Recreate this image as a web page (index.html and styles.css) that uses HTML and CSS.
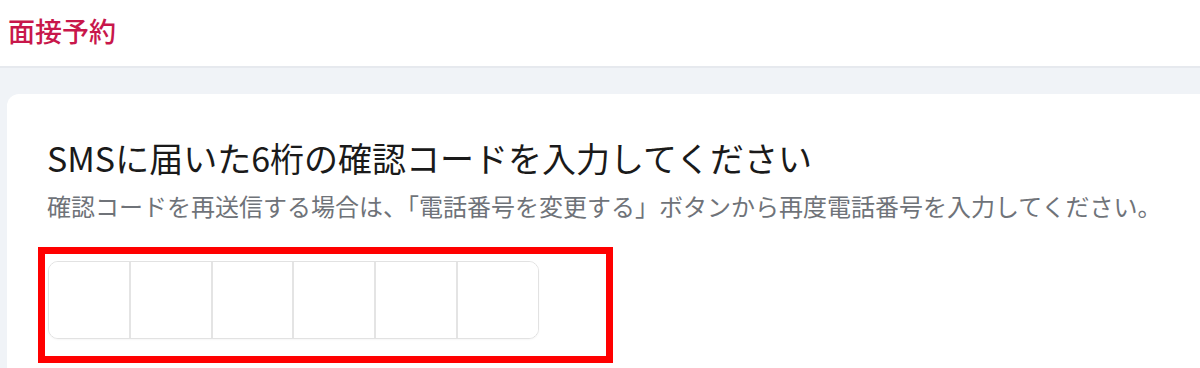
FILE: index.html
```html
<!DOCTYPE html>
<html lang="ja">
<head>
<meta charset="utf-8">
<title>面接予約</title>
<link rel="stylesheet" href="styles.css">
</head>
<body>
<header class="topbar">
  <h1 class="brand">面接予約</h1>
</header>
<main class="page">
  <section class="card">
    <h2 class="title">SMSに届いた6桁の確認コードを入力してください</h2>
    <p class="note">確認コードを再送信する場合は、「電話番号を変更する」ボタンから再度電話番号を入力してください。</p>
    <div class="highlight">
      <div class="otp">
        <input class="cell" type="text" maxlength="1" inputmode="numeric" aria-label="1桁目">
        <input class="cell" type="text" maxlength="1" inputmode="numeric" aria-label="2桁目">
        <input class="cell" type="text" maxlength="1" inputmode="numeric" aria-label="3桁目">
        <input class="cell" type="text" maxlength="1" inputmode="numeric" aria-label="4桁目">
        <input class="cell" type="text" maxlength="1" inputmode="numeric" aria-label="5桁目">
        <input class="cell" type="text" maxlength="1" inputmode="numeric" aria-label="6桁目">
      </div>
    </div>
  </section>
</main>
</body>
</html>
```

FILE: styles.css
```css
* { box-sizing: border-box; }
html, body {
  margin: 0;
  padding: 0;
  height: 100%;
  overflow: hidden;
}
body {
  font-family: "Noto Sans CJK JP", "Noto Sans", sans-serif;
  background: #f0f3f7;
  color: #1a1a1a;
}
.topbar {
  height: 68px;
  background: #ffffff;
  border-bottom: 2px solid #e6e9ee;
  display: flex;
  align-items: center;
  padding-left: 8px;
}
.brand {
  margin: 0;
  font-size: 27px;
  font-weight: 500;
  color: #c8174b;
  line-height: 1;
  padding-bottom: 6px;
}
.page {
  padding: 26px 0 0 7px;
}
.card {
  background: #ffffff;
  border-radius: 12px 0 0 0;
  width: 1220px;
  min-height: 274px;
  padding: 40px 0 0 40px;
}
.title {
  margin: 0;
  font-size: 34px;
  font-weight: 400;
  line-height: 48px;
  color: #1a1a1a;
}
.note {
  margin: 8px 0 0;
  font-size: 24px;
  line-height: 32px;
  color: #6f7379;
}
.highlight {
  margin: 25px 0 0 -9px;
  width: 575px;
  height: 116px;
  border: 7px solid #ff0000;
  padding: 7px 0 0 3px;
}
.otp {
  display: flex;
  width: 491px;
  height: 78px;
  border: 1px solid #e2e2e2;
  border-radius: 10px;
  box-shadow: 0 1px 2px rgba(0,0,0,0.04);
  overflow: hidden;
}
.cell {
  flex: 1 1 0;
  min-width: 0;
  height: 100%;
  border: 0;
  border-left: 2px solid #e4e4e4;
  background: #ffffff;
  font: inherit;
  font-size: 28px;
  text-align: center;
  outline: none;
}
.cell:first-child { border-left: 0; }
```
